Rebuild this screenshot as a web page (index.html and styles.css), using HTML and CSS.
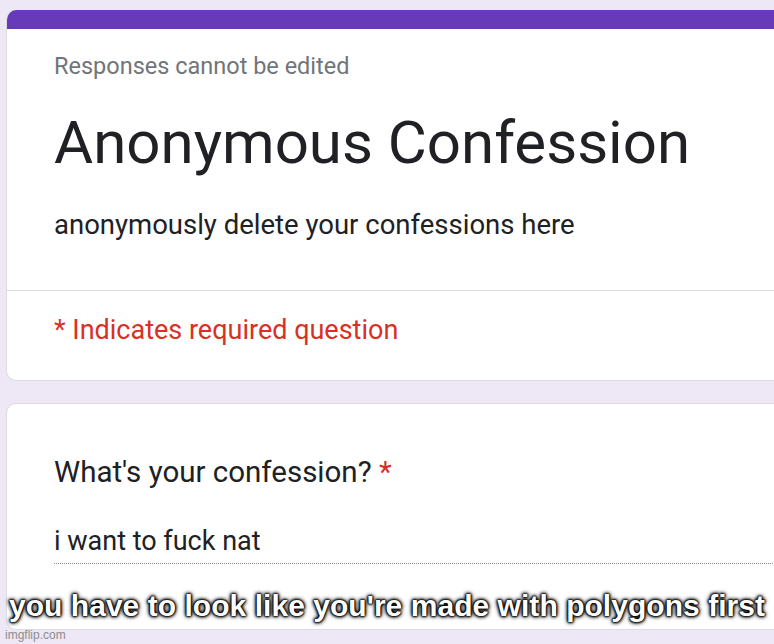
FILE: index.html
```html
<!DOCTYPE html>
<html lang="en">
<head>
  <meta charset="UTF-8">
  <title>Anonymous Confession</title>
  <link rel="stylesheet" href="styles.css">
</head>
<body>
  <div class="page">
    <div class="card head">
      <div class="bar"></div>
      <div class="head-top">
        <div class="note">Responses cannot be edited</div>
        <div class="title">Anonymous Confession</div>
        <div class="desc">anonymously delete your confessions here</div>
      </div>
      <div class="req">* Indicates required question</div>
    </div>
    <div class="card question">
      <div class="q-title">What's your confession? <span class="star">*</span></div>
      <div class="answer">i want to fuck nat</div>
    </div>
  </div>
  <div class="caption">you have to look like you're made with polygons first</div>
  <div class="watermark">imgflip.com</div>
</body>
</html>
```

FILE: styles.css
```css
body{
  margin: 0;
  background: #ede7f6;
  overflow: hidden;
  font-family: Roboto, "Noto Sans", sans-serif;
  color: #202124;
}
.page{
  padding: 10px 0 0 6px;
  width: 800px;
}
.card{
  background: #fff;
  border: 1px solid #dadce0;
  border-radius: 10px;
  margin-bottom: 22px;
  overflow: hidden;
}
.head{
  border-top: none;
}
.bar{
  height: 19px;
  background: #673ab7;
}
.head-top{
  padding: 22px 47px 0;
  border-bottom: 1px solid #dadce0;
  height: 239px;
}
.note{
  font-size: 23.5px;
  line-height: 30px;
  color: #70757a;
}
.title{
  font-size: 60px;
  line-height: 72px;
  margin-top: 26px;
}
.desc{
  font-size: 27.5px;
  line-height: 32px;
  margin-top: 30px;
}
.req{
  padding: 23px 47px 0;
  height: 66px;
  font-size: 27px;
  line-height: 32px;
  color: #d93025;
}
.question{
  padding: 50px 0 0 47px;
  height: 175px;
}
.q-title{
  font-size: 29.5px;
  line-height: 36px;
}
.star{
  color: #d93025;
}
.answer{
  font-size: 27px;
  line-height: 32px;
  margin-top: 35px;
  padding-bottom: 6px;
  border-bottom: 1px dotted #80868b;
}
.caption{
  position: absolute;
  left: 0;
  right: 0;
  top: 588px;
  text-align: center;
  font-family: "Liberation Sans", Arial, sans-serif;
  font-weight: bold;
  font-size: 30px;
  letter-spacing: 0.04px;
  line-height: 36px;
  color: #fff;
  text-shadow: 0 0 5px #000, 0 0 4px #000, 0 0 3px #000, 0 0 2px #000, 0 0 2px #000, 0 0 1px #000;
}
.watermark{
  position: absolute;
  left: 5px;
  top: 628px;
  font-family: "Liberation Sans", Arial, sans-serif;
  font-size: 12px;
  color: #8c8c8c;
}
```
